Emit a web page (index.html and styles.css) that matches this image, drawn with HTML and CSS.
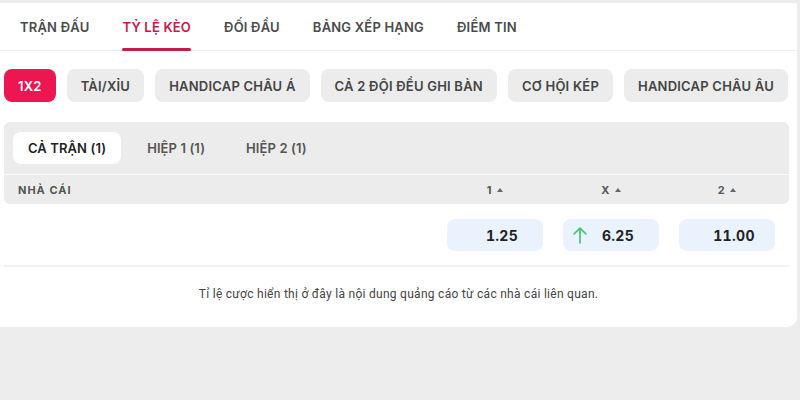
FILE: index.html
```html
<!DOCTYPE html>
<html lang="vi">
<head>
<meta charset="utf-8">
<link rel="stylesheet" href="styles.css">
</head>
<body>
<div class="card">
  <nav class="tabs">
    <span class="tab">TRẬN ĐẤU</span>
    <span class="tab active">TỶ LỆ KÈO</span>
    <span class="tab">ĐỐI ĐẦU</span>
    <span class="tab">BẢNG XẾP HẠNG</span>
    <span class="tab">ĐIỂM TIN</span>
  </nav>
  <div class="pills">
    <span class="pill on">1X2</span>
    <span class="pill">TÀI/XỈU</span>
    <span class="pill">HANDICAP CHÂU Á</span>
    <span class="pill">CẢ 2 ĐỘI ĐỀU GHI BÀN</span>
    <span class="pill">CƠ HỘI KÉP</span>
    <span class="pill">HANDICAP CHÂU ÂU</span>
  </div>
  <div class="panel">
    <div class="subtabs">
      <span class="sub on">CẢ TRẬN (1)</span>
      <span class="sub">HIỆP 1 (1)</span>
      <span class="sub">HIỆP 2 (1)</span>
    </div>
    <div class="head">
      <span class="name">NHÀ CÁI</span>
      <span class="col">1 <i class="tri"></i></span>
      <span class="col">X <i class="tri"></i></span>
      <span class="col">2 <i class="tri"></i></span>
    </div>
  </div>
  <div class="odds">
    <span class="spacer"></span>
    <span class="odd">1.25</span>
    <span class="odd"><svg class="arrow" width="14" height="18" viewBox="0 0 14 18"><path d="M7 17V2M1 8l6-6 6 6" fill="none" stroke="#3cc466" stroke-width="1.6" stroke-linecap="round" stroke-linejoin="round"/></svg>6.25</span>
    <span class="odd">11.00</span>
  </div>
  <p class="note">Tỉ lệ cược hiển thị ở đây là nội dung quảng cáo từ các nhà cái liên quan.</p>
</div>
</body>
</html>
```
FILE: styles.css
```css
* { box-sizing: border-box; }
html, body { margin: 0; padding: 0; }
body {
  background: #ededed;
  width: 800px;
  height: 400px;
  overflow: hidden;
  font-family: Inter, "Noto Sans", sans-serif;
}
.card {
  margin-top: 3px;
  margin-right: 3px;
  background: #fff;
  border-radius: 0 0 10px 0;
  height: 324px;
}
.tabs {
  display: flex;
  gap: 33px;
  padding-left: 20px;
  height: 48px;
  border-bottom: 1px solid #efefef;
}
.tab {
  display: flex;
  align-items: center;
  font-size: 13px;
  font-weight: 600;
  color: #4a4a4a;
  letter-spacing: 0.2px;
  height: 48px;
  padding-bottom: 1px;
  position: relative;
}
.tab.active { color: #c9184a; }
.tab.active::after {
  content: "";
  position: absolute;
  left: 0; right: 0; bottom: 0;
  height: 3px;
  border-radius: 2px;
  background: #c9184a;
}
.pills {
  display: flex;
  gap: 11px;
  padding-left: 4px;
  margin-top: 18px;
}
.pill {
  height: 33px;
  display: flex;
  align-items: center;
  padding: 0 14px;
  border-radius: 8px;
  background: #ececec;
  color: #444;
  font-size: 13px;
  font-weight: 600;
  letter-spacing: 0.22px;
}
.pill.on { background: #ee1650; color: #fff; }
.panel {
  margin: 20px 8px 0 4px;
  background: #ececec;
  border-radius: 6px;
}
.subtabs {
  display: flex;
  gap: 11px;
  padding: 10px 9px 10px 9px;
  border-bottom: 1px solid #fafafa;
}
.sub {
  height: 32px;
  display: flex;
  align-items: center;
  padding: 0 15px;
  border-radius: 8px;
  font-size: 13px;
  font-weight: 600;
  letter-spacing: 0.1px;
  color: #555;
}
.sub.on { background: #fff; color: #222; }
.head {
  display: grid;
  grid-template-columns: 1fr 96px 96px 96px;
  column-gap: 20px;
  padding: 0 14px 0 14px;
  height: 29px;
  align-items: center;
  font-size: 11px;
  font-weight: 700;
  color: #555;
  letter-spacing: 1px;
}
.col { text-align: center; }
.tri {
  display: inline-block;
  width: 0; height: 0;
  border-left: 3px solid transparent;
  border-right: 3px solid transparent;
  border-bottom: 4px solid #666;
  vertical-align: 2px;
  margin-left: 1px;
}
.odds {
  display: grid;
  grid-template-columns: 1fr 96px 96px 96px;
  column-gap: 20px;
  margin: 15px 8px 0 4px;
  padding: 0 14px 14px 0;
  border-bottom: 2px solid #f2f2f2;
}
.odd {
  position: relative;
  height: 32px;
  display: flex;
  align-items: center;
  justify-content: center;
  padding-left: 14px;
  border-radius: 8px;
  background: #eaf3fd;
  font-size: 14px;
  font-weight: 700;
  letter-spacing: 0.3px;
  font-variant-numeric: tabular-nums;
  color: #222;
}
.arrow {
  position: absolute;
  left: 10px;
  top: 7px;
}
.note {
  margin: 20px 0 0;
  text-align: center;
  font-family: Roboto, "Liberation Sans", sans-serif;
  font-size: 12px;
  letter-spacing: 0.28px;
  color: #444;
}
```
